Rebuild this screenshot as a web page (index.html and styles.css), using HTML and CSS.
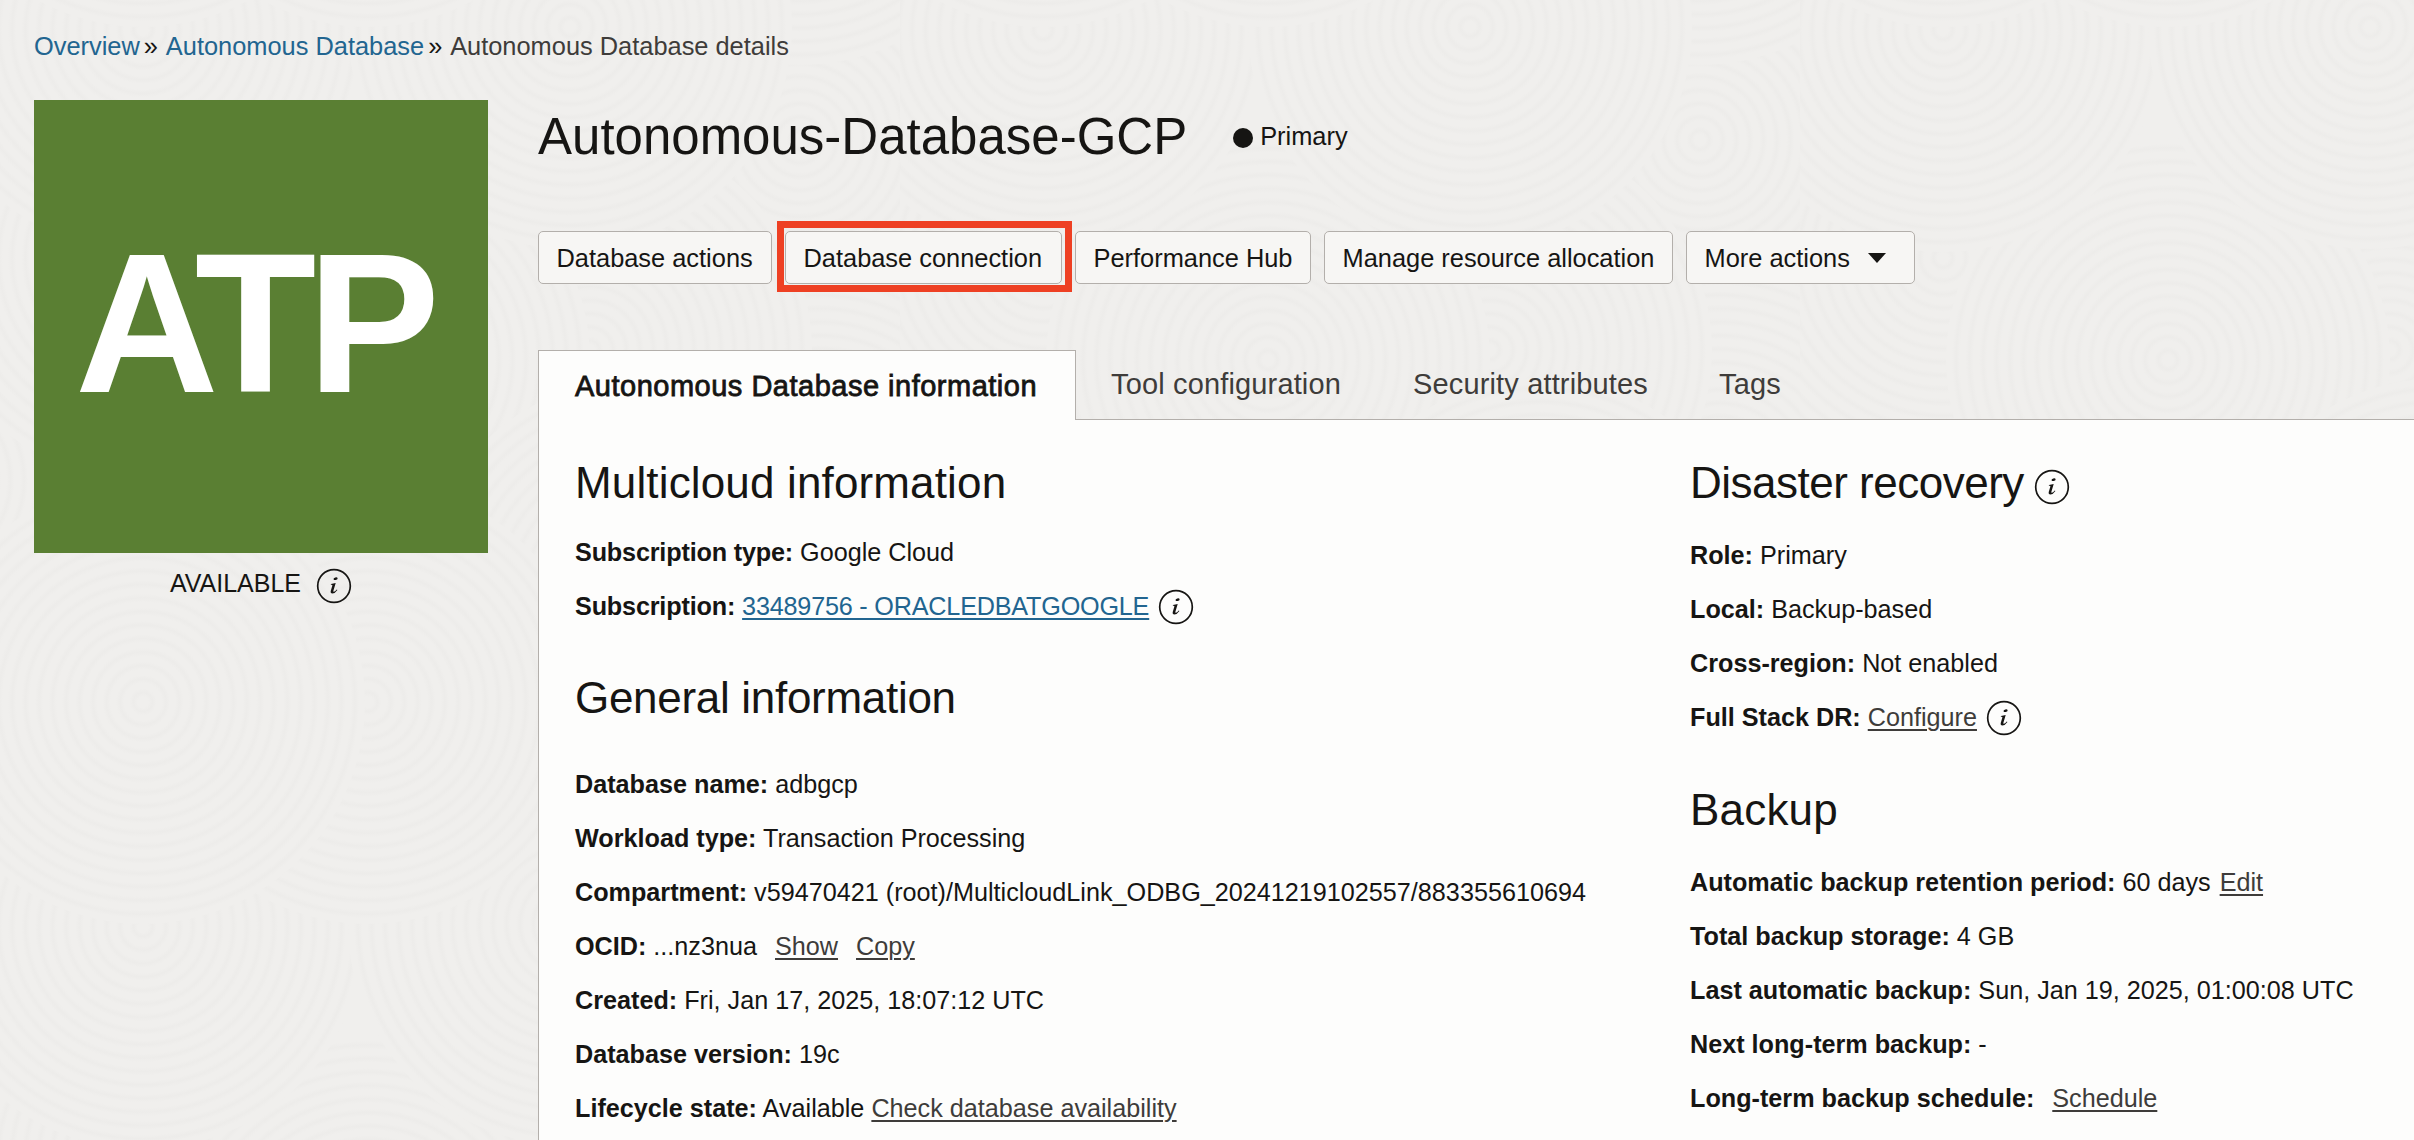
FILE: index.html
```html
<!DOCTYPE html>
<html lang="en">
<head>
<meta charset="utf-8">
<title>Autonomous Database details</title>
<link rel="stylesheet" href="styles.css">
</head>
<body>
<svg class="texture" aria-hidden="true">
  <defs>
    <radialGradient id="rings" gradientUnits="userSpaceOnUse" cx="0" cy="0" r="13.500" spreadMethod="repeat">
      <stop offset="0" stop-color="#f0efed"/><stop offset=".4" stop-color="#f0efed"/>
      <stop offset=".7" stop-color="#edecea"/><stop offset="1" stop-color="#f0efed"/>
    </radialGradient>
    <circle id="disc" r="222" fill="url(#rings)"/>
    <pattern id="swirl" width="900" height="897" patternUnits="userSpaceOnUse">
      <rect width="900" height="897" fill="#f0efed"/>
      <use href="#disc" x="800" y="140"/><use href="#disc" x="-100" y="140"/>
      <use href="#disc" x="820" y="480"/><use href="#disc" x="-80" y="480"/>
      <use href="#disc" x="143" y="258"/><use href="#disc" x="590" y="350"/>
      <use href="#disc" x="368" y="360"/><use href="#disc" x="640" y="600"/>
      <use href="#disc" x="800" y="740"/><use href="#disc" x="-100" y="740"/><use href="#disc" x="800" y="-157"/>
      <use href="#disc" x="143" y="30"/><use href="#disc" x="143" y="927"/>
      <use href="#disc" x="570" y="27"/><use href="#disc" x="570" y="924"/>
      <use href="#disc" x="368" y="702"/><use href="#disc" x="368" y="-195"/>
      <use href="#disc" x="143" y="702"/><use href="#disc" x="143" y="-195"/>
    </pattern>
    <symbol id="info" viewBox="0 0 36 36">
      <circle cx="18" cy="18" r="16.3" fill="none" stroke="#161513" stroke-width="1.7"/>
      <ellipse cx="19.6" cy="10.7" rx="2.1" ry="1.3" transform="rotate(-15 19.6 10.7)" fill="#161513"/>
      <path d="M15 15.900l4.700-1-2.300 7.900q-.3 1.300.6 1 1.300-.5 2.800-2.300l.6.5q-2.400 3.500-5 3.500-2.300-.1-1.600-2.700l1.500-5q.3-1-.5-1l-1-.1z" fill="#161513"/>
    </symbol>
  </defs>
  <rect width="100%" height="100%" fill="url(#swirl)"/>
</svg>
<div class="page">
  <nav class="crumbs"><a>Overview</a><span class="sep">»</span><a>Autonomous Database</a><span class="sep">»</span><span class="here">Autonomous Database details</span></nav>
  <div class="layout">
    <aside class="side">
      <div class="badge"><span class="badge-text">ATP</span></div>
      <div class="status"><span>AVAILABLE</span><svg class="info"><use href="#info"/></svg></div>
    </aside>
    <main class="main">
      <header class="title"><h1>Autonomous-Database-GCP</h1><span class="dot"></span><span class="role">Primary</span></header>
      <div class="actions">
        <button class="btn b1"><span>Database actions</span></button>
        <button class="btn b2"><span>Database connection</span></button>
        <button class="btn b3"><span>Performance Hub</span></button>
        <button class="btn b4"><span>Manage resource allocation</span></button>
        <button class="btn b5"><span>More actions</span><svg class="caret" viewBox="0 0 18 10"><path d="M0 0h18l-9 10z" fill="#161513"/></svg></button>
      </div>
      <div class="tabs">
        <div class="tab active"><span>Autonomous Database information</span></div>
        <div class="tab t2">Tool configuration</div><div class="tab t3">Security attributes</div><div class="tab t4">Tags</div>
      </div>
      <section class="panel">
        <div class="col">
          <h2 class="h-multi">Multicloud information</h2>
          <p><b class="tight">Subscription type:</b> Google Cloud</p>
          <p><b class="tight">Subscription:</b> <a class="blue">33489756 - ORACLEDBATGOOGLE</a><svg class="info"><use href="#info"/></svg></p>
          <h2 class="h-general">General information</h2>
          <p><b>Database name:</b> adbgcp</p>
          <p><b>Workload type:</b> Transaction Processing</p>
          <p><b>Compartment:</b> v59470421 (root)/MulticloudLink_ODBG_20241219102557/883355610694</p>
          <p><b>OCID:</b> ...nz3nua<a class="gap">Show</a><a class="gap">Copy</a></p>
          <p><b>Created:</b> Fri, Jan 17, 2025, 18:07:12 UTC</p>
          <p><b>Database version:</b> 19c</p>
          <p><b>Lifecycle state:</b> Available <a>Check database availability</a></p>
        </div>
        <div class="col">
          <h2 class="h-dr">Disaster recovery<svg class="info"><use href="#info"/></svg></h2>
          <p><b>Role:</b> Primary</p>
          <p><b>Local:</b> Backup-based</p>
          <p><b>Cross-region:</b> Not enabled</p>
          <p><b>Full Stack DR:</b> <a>Configure</a><svg class="info"><use href="#info"/></svg></p>
          <h2 class="h-backup">Backup</h2>
          <p><b>Automatic backup retention period:</b> 60 days <a class="edit">Edit</a></p>
          <p><b>Total backup storage:</b> 4 GB</p>
          <p><b>Last automatic backup:</b> Sun, Jan 19, 2025, 01:00:08 UTC</p>
          <p><b>Next long-term backup:</b> -</p>
          <p><b>Long-term backup schedule:</b><a class="gap">Schedule</a></p>
        </div>
      </section>
    </main>
  </div>
</div>
</body>
</html>
```
FILE: styles.css
```css
* { box-sizing: border-box; }
body {
  margin: 0;
  width: 2414px;
  height: 1140px;
  overflow: hidden;
  background: #f0efed;
  color: #161513;
  font: 25.2px/54px "Liberation Sans", Arial, sans-serif;
}
/* page texture lies behind all content */
.texture { position: absolute; inset: 0; width: 2414px; height: 1140px; z-index: -1; }
.page { height: 1140px; overflow: hidden; display: flex; flex-direction: column; }

.crumbs { height: 100px; padding: 19px 0 0 34px; display: flex; white-space: nowrap; font-size: 25.4px; }
.crumbs a { color: #226590; }
.crumbs .here { color: #3e3c3a; }
.crumbs .sep { width: 26px; padding-left: 4px; }

.layout { display: flex; flex: 1; }
.side { width: 538px; flex: none; padding-left: 34px; }
.badge {
  width: 454px; height: 453px; background: #5a7f33; color: #fff;
  display: flex; justify-content: center; align-items: center;
}
.badge-text { font-size: 199px; font-weight: 700; line-height: 1; letter-spacing: -9px; margin: -6px 16px 0 0; }
.status { width: 454px; height: 66px; display: flex; justify-content: center; gap: 15px; padding-top: 3px; font-size: 25px; }
.info { width: 36px; height: 36px; flex: none; }
.status .info { margin-top: 12px; }

.main { flex: 1; display: flex; flex-direction: column; }
.title { display: flex; height: 131px; align-items: flex-start; }
h1 { margin: 0; font-size: 51px; font-weight: 400; line-height: 73px; white-space: nowrap; }
.dot { width: 20px; height: 20px; border-radius: 50%; background: #161513; margin: 28px 7px 0 46px; }
.role { margin-top: 9px; font-size: 25.4px; }

.actions { display: flex; height: 119px; }
.btn {
  position: relative;
  height: 53px; margin: 0 13px 0 0; padding: 0 17.5px; border: 1px solid #b3afab; border-radius: 5px;
  background: #f7f6f4; color: #161513; font: 25.4px/50px "Liberation Sans", Arial, sans-serif; white-space: nowrap;
  display: flex; align-items: center; flex: none;
}
.b1 { width: 234px; } .b2 { width: 277px; } .b3 { width: 236px; } .b4 { width: 349px; } .b5 { width: 229px; }
/* highlight frame drawn around the connection button */
.b2::after { content: ""; position: absolute; inset: -11px -11px -9px -9px; border: 7px solid #ee4023; }
.caret { width: 18px; height: 10px; margin-left: 18px; }

.tabs { display: flex; height: 70px; border-bottom: 1px solid #b3afab; font-size: 29px; line-height: 69px; letter-spacing: .15px; color: #3e3c3a; white-space: nowrap; }
.active {
  width: 538px; height: 70px; line-height: 71px; padding-left: 36px; border: 1px solid #b3afab; border-bottom: 0;
  background: #fdfdfc; color: #161513; letter-spacing: .5px; -webkit-text-stroke: .8px #161513;
}
.t2 { margin-left: 35px; width: 302px; } .t3 { width: 306px; }

.panel { flex: 1; display: flex; background: #fdfdfc; border-left: 1px solid #b3afab; padding-left: 36px; }
.col { width: 1115px; flex: none; }
p { margin: 0; height: 54px; white-space: nowrap; }
h2 { margin: 0; font-size: 44px; font-weight: 400; line-height: 54px; white-space: nowrap; }
p a { color: #3e3c3a; text-decoration: underline; text-decoration-thickness: 2px; text-underline-offset: 3px; }
p a.blue { color: #226590; letter-spacing: -.2px; }
.tight { letter-spacing: -.17px; }
.gap { margin-left: 18px; }
.edit { margin-left: 2px; }
p .info { margin-left: 9px; vertical-align: -10px; }
.h-multi { height: 105px; padding-top: 36px; letter-spacing: .15px; }
.h-dr { height: 108px; padding-top: 36px; letter-spacing: -.5px; }
.h-dr .info { margin-left: 10px; vertical-align: -7px; }
.h-general { height: 124px; padding-top: 38px; letter-spacing: -.3px; }
.h-backup { height: 111px; padding-top: 39px; letter-spacing: .2px; }
```
